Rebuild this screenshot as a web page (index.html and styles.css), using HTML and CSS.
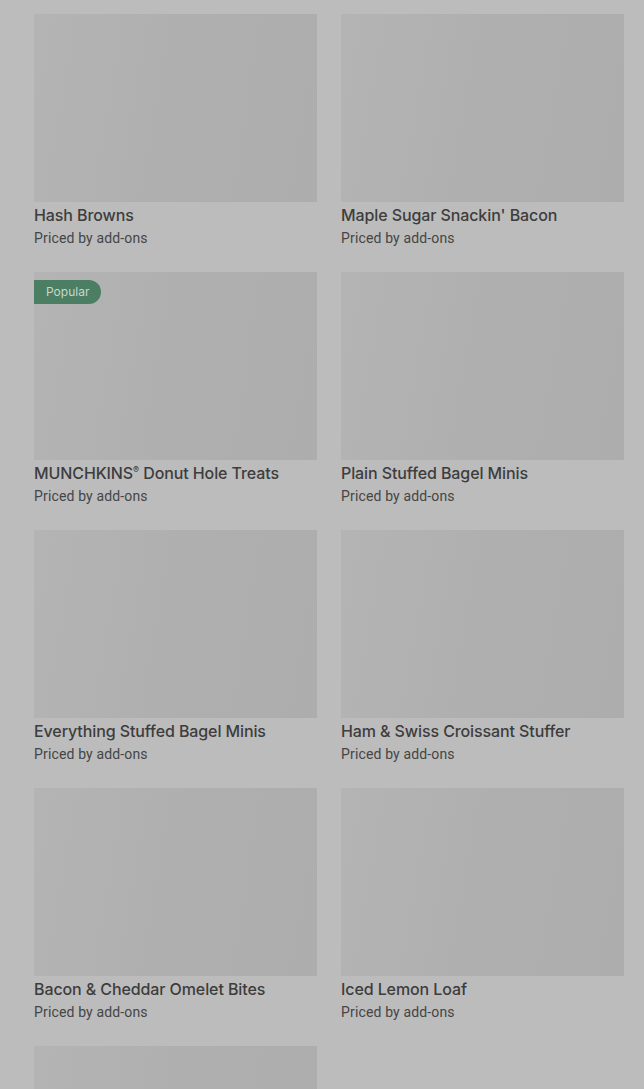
FILE: index.html
```html
<!DOCTYPE html>
<html lang="en">
<head>
    <title>Menu</title>
    <meta charset="utf-8">
    <link rel="stylesheet" href="styles.css">
</head>
<body>
    <div class="menu">
        <div class="item">
            <div class="photo"></div>
            <div class="name">Hash Browns</div>
            <div class="price">Priced by add-ons</div>
        </div>
        <div class="item">
            <div class="photo"></div>
            <div class="name">Maple Sugar Snackin' Bacon</div>
            <div class="price">Priced by add-ons</div>
        </div>
        <div class="item">
            <div class="photo"><span class="badge">Popular</span></div>
            <div class="name">MUNCHKINS<sup>®</sup> Donut Hole Treats</div>
            <div class="price">Priced by add-ons</div>
        </div>
        <div class="item">
            <div class="photo"></div>
            <div class="name">Plain Stuffed Bagel Minis</div>
            <div class="price">Priced by add-ons</div>
        </div>
        <div class="item">
            <div class="photo"></div>
            <div class="name">Everything Stuffed Bagel Minis</div>
            <div class="price">Priced by add-ons</div>
        </div>
        <div class="item">
            <div class="photo"></div>
            <div class="name">Ham &amp; Swiss Croissant Stuffer</div>
            <div class="price">Priced by add-ons</div>
        </div>
        <div class="item">
            <div class="photo"></div>
            <div class="name">Bacon &amp; Cheddar Omelet Bites</div>
            <div class="price">Priced by add-ons</div>
        </div>
        <div class="item">
            <div class="photo"></div>
            <div class="name">Iced Lemon Loaf</div>
            <div class="price">Priced by add-ons</div>
        </div>
        <div class="item">
            <div class="photo"></div>
            <div class="name">&nbsp;</div>
            <div class="price">&nbsp;</div>
        </div>
    </div>
</body>
</html>
```

FILE: styles.css
```css
/* menu grid under a dimmed overlay */
body {
    margin: 0;
    background: #bcbcbc;
    font-family: Inter, Roboto, "Liberation Sans", sans-serif;
    color: #3e3e3e;
}
.menu {
    display: grid;
    grid-template-columns: 283px 283px;
    column-gap: 24px;
    row-gap: 24px;
    padding: 14px 20px 0 34px;
}
.photo {
    position: relative;
    height: 188px;
    background: linear-gradient(100deg, #b4b4b4 0%, #afafaf 50%, #adadad 100%);
}
.badge {
    position: absolute;
    top: 8px;
    left: 0;
    height: 24px;
    line-height: 24px;
    padding: 0 12px;
    border-radius: 0 12px 12px 0;
    background: #4b7e62;
    color: #c6d8cd;
    font-size: 12px;
}
.name {
    margin-top: 3px;
    font-size: 16px;
    font-weight: 500;
    line-height: 20px;
    letter-spacing: -0.1px;
    color: #3d3d3d;
}
.name sup {
    font-size: 9px;
    line-height: 0;
}
.price {
    margin-top: 3px;
    font-family: Roboto, "Liberation Sans", sans-serif;
    font-size: 14px;
    line-height: 20px;
    letter-spacing: 0.15px;
    color: #454545;
}
```
